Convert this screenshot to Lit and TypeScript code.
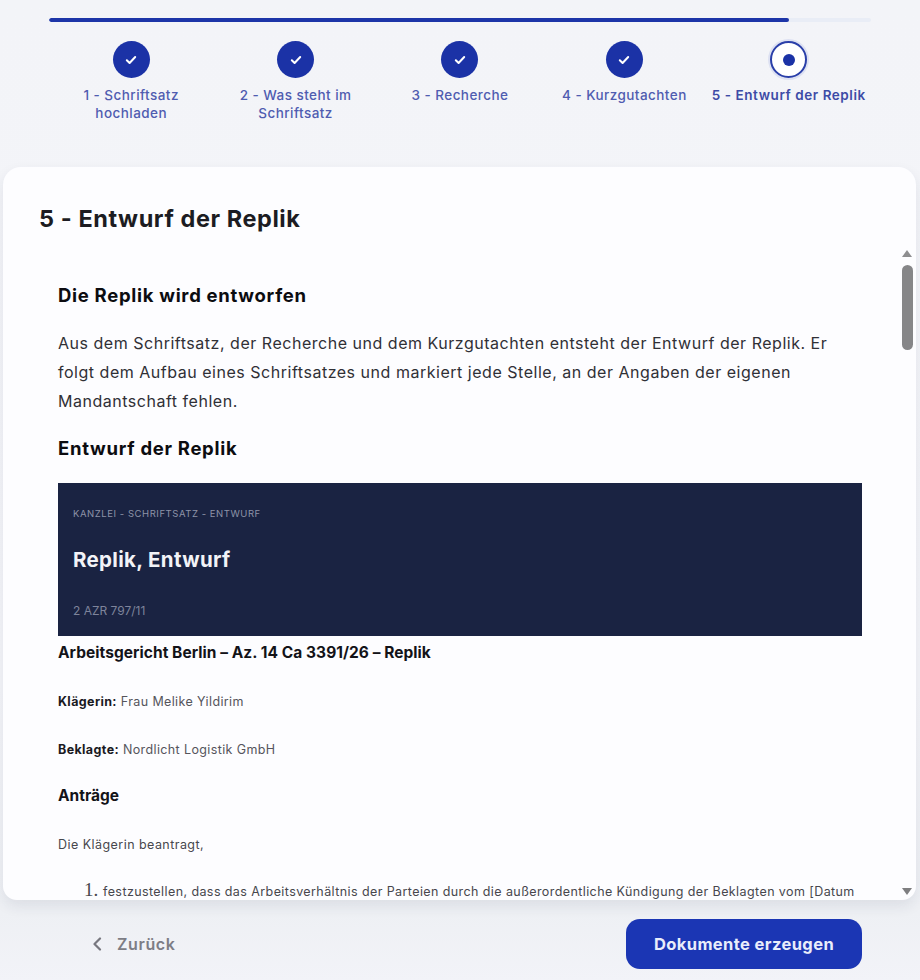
import { LitElement, html, css } from "lit";
import { customElement } from "lit/decorators.js";

const STEPS = ["1 - Schriftsatz hochladen", "2 - Was steht im Schriftsatz", "3 - Recherche", "4 - Kurzgutachten", "5 - Entwurf der Replik"];

@customElement("app-root")
export class AppRoot extends LitElement {
  static styles = css`
    :host { display: block; width: 920px; height: 980px; font-family: Inter, "Noto Sans", sans-serif; color: #111; background: linear-gradient(#f3f4f8, #f4f5f9 70%, #eef0f4 93%, #f2f3f8); overflow: hidden; }
    * { box-sizing: border-box; }
    .page { height: 980px; display: flex; flex-direction: column; }
    .top { padding: 18px 49px 0; height: 167px; flex: none; }
    .track { height: 4px; border-radius: 2px; background: #e9edf6; overflow: hidden; }
    .fill { width: 90%; height: 100%; background: #1d35a8; border-radius: 2px; }
    .steps { display: grid; grid-template-columns: repeat(5, 1fr); margin-top: 19px; }
    .step { display: flex; flex-direction: column; align-items: center; text-align: center; color: #4f5cb0; font-size: 13.5px; line-height: 17.5px; letter-spacing: 0.45px; font-weight: 500; }
    .step span { margin-top: 9px; padding: 0 20px; }
    .step.nowrap span { padding: 0; white-space: nowrap; }
    .step.active span { font-weight: 600; color: #3d4ba6; letter-spacing: .55px; }
    .dot { width: 37px; height: 37px; border-radius: 50%; background: #1b32a6; display: flex; align-items: center; justify-content: center; }
    .active .dot { background: #fff; border: 2px solid #2a3fa9; box-shadow: 0 0 0 2px #dde1f2; }
    .inner { width: 12px; height: 12px; border-radius: 50%; background: #1b32a6; }
    .card { position: relative; flex: none; margin: 0 4px 0 3px; height: 733px; background: #fdfdff; border-radius: 18px 18px 14px 14px; box-shadow: 0 6px 14px rgba(30,40,80,.09); display: flex; flex-direction: column; overflow: hidden; }
    h1 { margin: 0; padding: 37px 36px 0; height: 81px; flex: none; font-size: 23.5px; line-height: 30px; font-weight: 700; color: #1c1c22; letter-spacing: 0.57px; }
    .body { flex: 1; overflow: hidden; padding: 0 54px 0 55px; }
    h2 { margin: 0; font-size: 18.5px; line-height: 24px; font-weight: 700; color: #0c0c10; letter-spacing: .7px; }
    .h2a { margin-top: 35px; }
    .lead { margin: 22px 0 0; font-size: 16px; line-height: 29px; color: #303036; letter-spacing: .52px; }
    .h2b { margin-top: 20px; }
    .banner { margin-top: 23px; height: 153px; background: #1a2342; padding: 24px 15px 0; }
    .eyebrow { font-size: 9.5px; line-height: 14px; color: #8d93a8; text-transform: uppercase; letter-spacing: .55px; }
    .btitle { margin-top: 25px; font-size: 20.5px; line-height: 28px; font-weight: 700; color: #f2f3f7; letter-spacing: .33px; }
    .ref { margin-top: 29px; font-size: 12px; line-height: 16px; color: #7e849b; }
    h3 { margin: 7px 0 0; font-size: 15.5px; line-height: 20px; font-weight: 700; color: #131318; letter-spacing: .05px; }
    .meta { margin: 29px 0 0; font-size: 12.5px; line-height: 19px; color: #55555c; letter-spacing: .38px; }
    .meta b { color: #1a1a1f; font-weight: 700; }
    .meta + .meta { margin-top: 29px; }
    h4 { margin: 27px 0 0; font-size: 15.5px; line-height: 20px; font-weight: 700; color: #131318; }
    .plain { margin: 29px 0 0; font-size: 12.5px; line-height: 19px; color: #47474d; letter-spacing: .45px; }
    ol { margin: 26px 0 0; padding: 0 0 0 45px; font-size: 12.5px; line-height: 20px; color: #47474d; letter-spacing: .41px; }
    li::marker { font-family: "Liberation Serif", serif; font-size: 19px; letter-spacing: 0; }
    .bar { position: absolute; right: 2px; top: 83px; bottom: 0; width: 13px; }
    .up, .down { position: absolute; left: 1px; width: 0; height: 0; border-left: 5.5px solid transparent; border-right: 5.5px solid transparent; }
    .up { top: 0; border-bottom: 7px solid #8e8e90; }
    .down { bottom: 5px; border-top: 7px solid #7e7e80; }
    .thumb { position: absolute; left: 1px; top: 15px; width: 11px; height: 85px; border-radius: 6px; background: #868688; }
    .foot { flex: 1; display: flex; align-items: flex-start; justify-content: space-between; padding: 19px 58px 0 92px; }
    .back { display: flex; align-items: center; gap: 15px; height: 50px; color: #7d7d85; font-size: 16px; font-weight: 600; letter-spacing: .6px; }
    .cta { width: 236px; height: 50px; border: 0; border-radius: 14px; background: #1b36b4; color: #e9edfb; font: 700 16.5px Inter, "Noto Sans", sans-serif; letter-spacing: .4px; }
  `;

  render() {
    return html`<div class="page">
      <div class="top">
        <div class="track"><div class="fill"></div></div>
        <div class="steps">
          ${STEPS.map((s, i) => html`<div class="step ${i === 4 ? "active" : ""} ${i >= 2 ? "nowrap" : ""}">
            <div class="dot">${i === 4 ? html`<div class="inner"></div>` : html`<svg width="14" height="14" viewBox="0 0 14 14" fill="none"><path d="M2.8 7.2 5.6 10 11.2 4" stroke="#fff" stroke-width="2" stroke-linecap="round" stroke-linejoin="round"/></svg>`}</div>
            <span>${s}</span>
          </div>`)}
        </div>
      </div>
      <div class="card">
        <h1>5 - Entwurf der Replik</h1>
        <div class="body">
          <h2 class="h2a">Die Replik wird entworfen</h2>
          <p class="lead">Aus dem Schriftsatz, der Recherche und dem Kurzgutachten entsteht der Entwurf der Replik. Er folgt dem Aufbau eines Schriftsatzes und markiert jede Stelle, an der Angaben der eigenen Mandantschaft fehlen.</p>
          <h2 class="h2b">Entwurf der Replik</h2>
          <div class="banner">
            <div class="eyebrow">Kanzlei - Schriftsatz - Entwurf</div>
            <div class="btitle">Replik, Entwurf</div>
            <div class="ref">2 AZR 797/11</div>
          </div>
          <h3>Arbeitsgericht Berlin – Az. 14 Ca 3391/26 – Replik</h3>
          <p class="meta"><b>Klägerin:</b> Frau Melike Yildirim</p>
          <p class="meta"><b>Beklagte:</b> Nordlicht Logistik GmbH</p>
          <h4>Anträge</h4>
          <p class="plain">Die Klägerin beantragt,</p>
          <ol><li>festzustellen, dass das Arbeitsverhältnis der Parteien durch die außerordentliche Kündigung der Beklagten vom [Datum der Kündigung] nicht aufgelöst worden ist;</li></ol>
        </div>
        <div class="bar"><div class="up"></div><div class="thumb"></div><div class="down"></div></div>
      </div>
      <div class="foot">
        <div class="back"><svg width="10" height="14" viewBox="0 0 10 14" fill="none"><path d="M8 1.5 2.5 7 8 12.5" stroke="#77777f" stroke-width="2.2" stroke-linecap="round" stroke-linejoin="round"/></svg>Zurück</div>
        <button class="cta">Dokumente erzeugen</button>
      </div>
    </div>`;
  }
}
